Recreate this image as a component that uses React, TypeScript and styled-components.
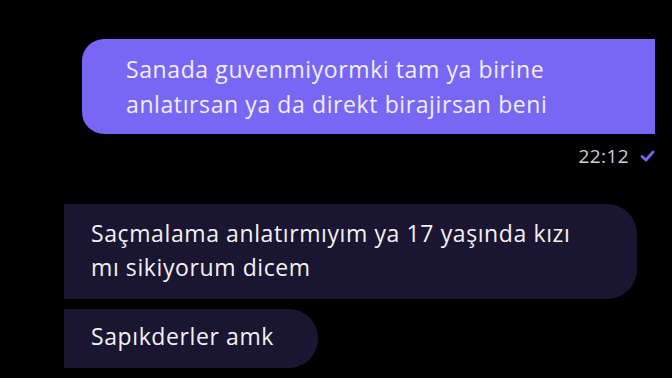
import React from "react";
import styled, { createGlobalStyle } from "styled-components";

const Global = createGlobalStyle`
  html, body { margin: 0; padding: 0; background: #000; }
  body { width: 672px; height: 378px; overflow: hidden; font-family: "Open Sans", Lato, sans-serif; }
`;

const Screen = styled.div`
  width: 672px;
  height: 378px;
  background: #000;
  display: flex;
  flex-direction: column;
  padding-top: 39px;
  box-sizing: border-box;
`;

const SentRow = styled.div`
  display: flex;
  justify-content: flex-end;
  padding-right: 17px;
`;

const SentBubble = styled.div`
  width: 573px;
  height: 95px;
  box-sizing: border-box;
  background: #7866f5;
  border-radius: 22px 0 0 22px;
  padding: 13px 10px 0 44px;
  color: #f1eeff;
  font-size: 23px;
  letter-spacing: 0.6px;
  line-height: 35px;
  white-space: nowrap;
`;

const Meta = styled.div`
  display: flex;
  justify-content: flex-end;
  align-items: center;
  gap: 11px;
  padding-right: 17px;
  margin-top: 11px;
  color: #cfcfd4;
  font-size: 19px;
  letter-spacing: 0.4px;
  height: 22px;
`;

const ReceivedList = styled.div`
  display: flex;
  flex-direction: column;
  align-items: flex-start;
  gap: 10px;
  margin-top: 37px;
  padding-left: 64px;
`;

const ReceivedBubble = styled.div<{ $w: number; $h: number; $r: number; $pt: number }>`
  width: ${(p) => p.$w}px;
  height: ${(p) => p.$h}px;
  box-sizing: border-box;
  background: #1a1631;
  border-radius: 0 ${(p) => p.$r}px ${(p) => p.$r}px 0;
  padding: ${(p) => p.$pt}px 10px 0 27px;
  color: #f2f2f4;
  font-size: 23px;
  letter-spacing: 0.6px;
  line-height: 34px;
  white-space: nowrap;
`;

const Check = () => (
  <svg width="15" height="12" viewBox="0 0 15 12">
    <path d="M2 6.5 L6 10 L13 2" fill="none" stroke="#7866f5" strokeWidth="2.8" strokeLinecap="round" strokeLinejoin="round" />
  </svg>
);

export default function App() {
  return (
    <Screen>
      <Global />
      <SentRow>
        <SentBubble>
          Sanada guvenmiyormki tam ya birine
          <br />
          anlatırsan ya da direkt birajirsan beni
        </SentBubble>
      </SentRow>
      <Meta>
        <span>22:12</span>
        <Check />
      </Meta>
      <ReceivedList>
        <ReceivedBubble $w={573} $h={95} $r={30} $pt={12}>
          Saçmalama anlatırmıyım ya 17 yaşında kızı
          <br />
          mı sikiyorum dicem
        </ReceivedBubble>
        <ReceivedBubble $w={254} $h={59} $r={29} $pt={10}>
          Sapıkderler amk
        </ReceivedBubble>
      </ReceivedList>
    </Screen>
  );
}
